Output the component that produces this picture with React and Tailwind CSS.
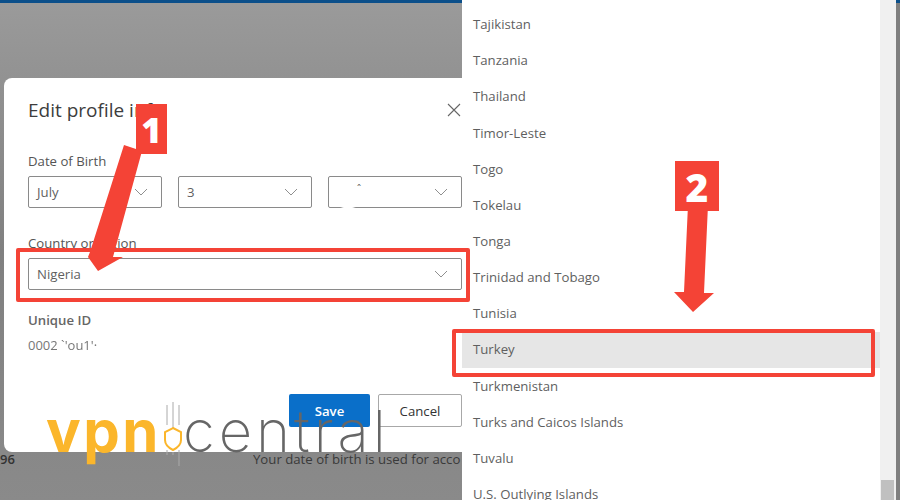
import React from "react";

const countries = ["Tajikistan","Tanzania","Thailand","Timor-Leste","Togo","Tokelau","Tonga","Trinidad and Tobago","Tunisia","Turkey","Turkmenistan","Turks and Caicos Islands","Tuvalu","U.S. Outlying Islands"];

const Chevron = () => (
  <svg width="14" height="8" viewBox="0 0 14 8" fill="none" stroke="#8f8f8f" strokeWidth="1"><path d="M1 1l6 6 6-6" /></svg>
);

function Select({ children, className = "" }) {
  return (
    <div className={`h-8 flex items-center justify-between pl-2 pr-[13px] border border-[#8a8a8a] rounded-[2px] text-[13.2px] text-[#5f5f5f] bg-white ${className}`}>
      <span className="pt-[1px]">{children}</span>
      <Chevron />
    </div>
  );
}

export default function App() {
  return (
    <div className="w-[900px] h-[500px] relative overflow-hidden flex bg-white" style={{ fontFamily: '"Open Sans","Noto Sans",sans-serif' }}>
      {/* page behind the dialog */}
      <div className="w-[462px] h-full relative bg-gradient-to-b from-[#9a9a9a] via-[#808080] to-[#8a8a8a] border-t-[3px] border-[#0b4f8a]">
        <div className="absolute left-0 bottom-[34px] text-[13px] font-semibold text-[#333] leading-none">96</div>
        <div className="absolute left-[253px] bottom-[34px] w-[209px] overflow-hidden whitespace-nowrap text-[13.2px] text-[#3a3a3a] leading-none">Your date of birth is used for acco</div>

        {/* dialog */}
        <div className="absolute left-1 top-[75px] w-[458px] h-[374px] bg-white rounded-l-lg pl-6 pt-[18px] flex flex-col">
          <div className="flex items-center justify-between h-7">
            <h2 className="text-[19px] font-medium text-[#3d3d3d] leading-7 whitespace-nowrap">Edit profile info</h2>
            <svg width="14" height="14" viewBox="0 0 14 14" fill="none" stroke="#666" strokeWidth="1.1" className="mr-[1px]"><path d="M1 1l12 12M13 1L1 13" /></svg>
          </div>
          <div className="mt-[27px] text-[13.2px] text-[#555] leading-5">Date of Birth</div>
          <div className="mt-[5px] grid grid-cols-3 gap-4">
            <Select>July</Select>
            <Select>3</Select>
            <div className="relative">
              <Select><span className="relative -top-1 left-5 text-[10px]">ˆ</span></Select>
              <div className="absolute left-[14px] bottom-[-2px] w-[12px] h-[8px] bg-white blur-[1px]" />
            </div>
          </div>
          <div className="mt-[25px] text-[13.2px] text-[#555] leading-5">Country or region</div>
          <Select className="mt-[5px]">Nigeria</Select>
          <div className="mt-5 text-[13.2px] font-semibold text-[#666] leading-5">Unique ID</div>
          <div className="mt-[5px] text-[13px] text-[#777] leading-5">
            000<span className="blur-[0.7px]">2 `'ou1'·</span>
          </div>
          <div className="mt-auto mb-[25px] flex justify-end gap-2">
            <button className="w-[81px] h-[33px] pt-[2px] bg-[#0a6fc9] text-white text-[13.2px] font-semibold rounded-[2px]">Save</button>
            <button className="w-[84px] h-[33px] pt-[2px] bg-white border border-[#a8a8a8] text-[#333] text-[13.2px] font-medium rounded-[2px]">Cancel</button>
          </div>
        </div>
      </div>

      {/* dropdown list */}
      <div className="w-[418px] h-full bg-white pt-[7px] shadow-[-1px_0_2px_rgba(0,0,0,0.08)]">
        {countries.map((c) => (
          <div key={c} className={`h-[36.15px] pl-[11px] flex items-center text-[13.2px] text-[#5f5f5f] ${c === "Turkey" ? "bg-[#e6e6e6]" : ""}`}>{c}</div>
        ))}
      </div>

      {/* scrollbar */}
      <div className="w-4 h-full bg-[#f0f0f0] flex flex-col justify-end px-[1px]">
        <div className="w-[13px] h-[20px] bg-[#c0c0c0]" />
      </div>
      <div className="w-1 h-full bg-[#7f7f7f] border-t-[3px] border-[#0b4f8a]" />

      {/* annotations */}
      <div className="absolute left-4 top-[248px] w-[454px] h-[54px] border-[4px] border-[#f44336] rounded-[2px]" />
      <div className="absolute left-[452px] top-[329px] w-[423px] h-[48px] border-[4px] border-[#f44336] rounded-[2px]" />
      <svg className="absolute left-0 top-0" width="900" height="500" viewBox="0 0 900 500">
        <polygon points="124,145 142,151 113,257 123,257 98,271 88,257 90,252" fill="#f44336" />
        <polygon points="688,205 708,205 704,293 714,293 693,312 674,292 684,292" fill="#f44336" />
      </svg>
      <div className="absolute left-[136px] top-[104px] w-[31px] h-[50px] bg-[#f44336] flex items-center justify-center text-white text-[35px] font-extrabold leading-none">1</div>
      <div className="absolute left-[675px] top-[161px] w-[44px] h-[50px] bg-[#f44336] flex items-center justify-center text-white text-[39px] font-extrabold leading-none">2</div>

      {/* watermark */}
      <div className="absolute left-[46px] top-[400px] h-[70px] flex items-start whitespace-nowrap">
        <span className="w-[114px] text-[58px] font-bold text-[#fbb62b] leading-[62px] tracking-[2.5px]" style={{ fontFamily: "Inter,sans-serif" }}>vpn</span>
        <svg className="ml-[1px]" width="24" height="66" viewBox="0 0 24 66" fill="none">
          <path d="M6 5v20M12 2v26M18 5v20M6 50v5M18 50v16M12 52v3" stroke="#aaa" strokeWidth="1" />
          <path d="M12 28l8 4v8c0 5-4 8-8 10-4-2-8-5-8-10v-8z" stroke="#fbb62b" strokeWidth="2" fill="#fff" fillOpacity="0.5" />
        </svg>
        <span className="ml-[-2px] text-[58px] font-extralight text-[#666] leading-[62px] tracking-[4px]" style={{ fontFamily: "Inter,sans-serif" }}>central</span>
      </div>
    </div>
  );
}
